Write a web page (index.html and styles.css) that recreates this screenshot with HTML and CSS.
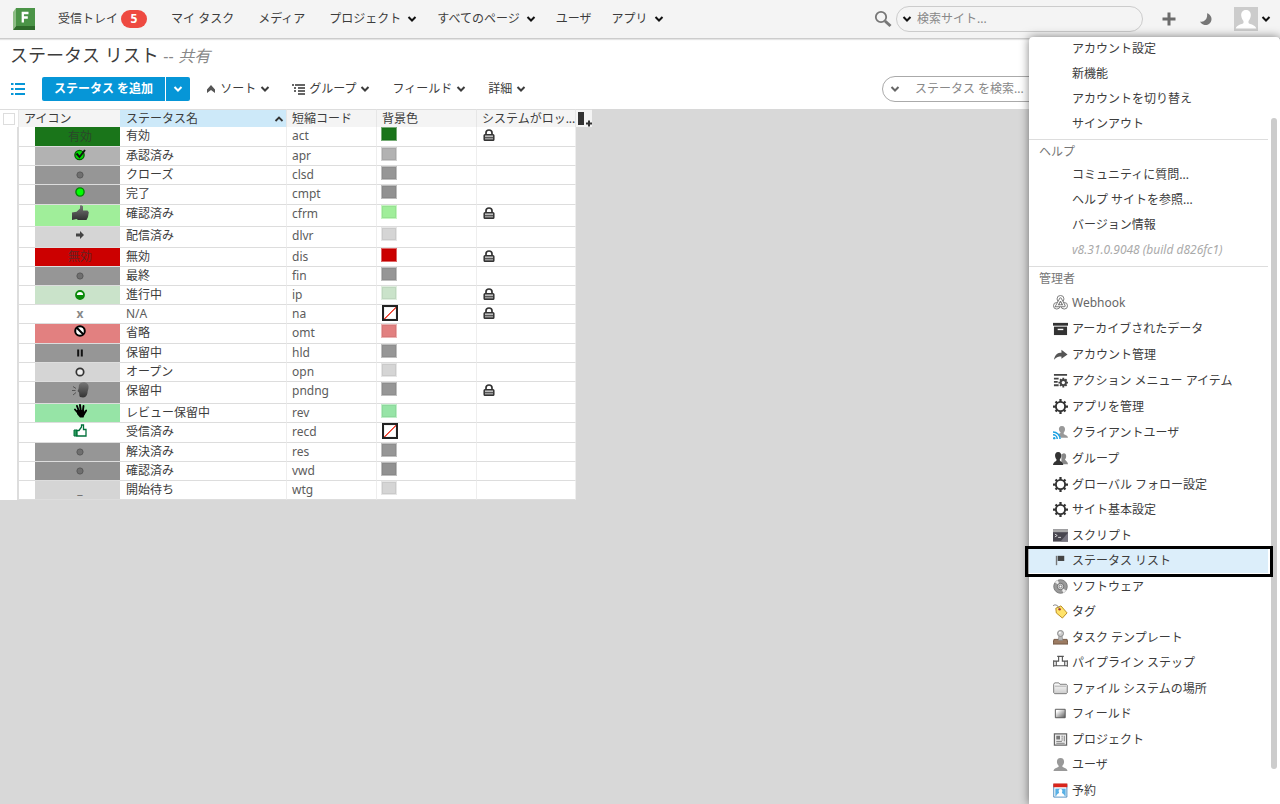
FILE: index.html
```html
<!DOCTYPE html>
<html lang="ja">
<head>
<meta charset="utf-8">
<title>ステータス リスト</title>
<link rel="stylesheet" href="styles.css">
</head>
<body>
<svg class="sprite" aria-hidden="true">
  <defs>
    <linearGradient id="g-dark" x1="0" y1="0" x2="0" y2="1"><stop offset="0" stop-color="#777"/><stop offset="1" stop-color="#333"/></linearGradient>
    <linearGradient id="g-field" x1="0" y1="0" x2="1" y2="1"><stop offset="0.2" stop-color="#fff"/><stop offset="1" stop-color="#555"/></linearGradient>
    <linearGradient id="g-folder" x1="0" y1="0" x2="0" y2="1"><stop offset="0" stop-color="#fff"/><stop offset="1" stop-color="#ccc"/></linearGradient>
  </defs>
  <symbol id="chev" viewBox="0 0 10 8"><path d="M1.500 2 L5 5.500 L8.500 2" fill="none" stroke="currentColor" stroke-width="2"/></symbol>
  <symbol id="lock" viewBox="0 0 12 12"><path d="M3 6V3.800a3 2.800 0 0 1 6 0V6" fill="none" stroke="#333" stroke-width="1.700"/><rect x="1.200" y="5.700" width="9.600" height="5.600" rx=".8" fill="#999" stroke="#333" stroke-width="1.500"/><path d="M2 7.200h8" stroke="#ccc"/><path d="M2 8.500h8" stroke="#444" stroke-width=".8"/></symbol>
  <symbol id="dot" viewBox="0 0 8 8"><circle cx="4" cy="4" r="3.100" fill="#6f6f6f" stroke="#5a5a5a"/></symbol>
  <symbol id="gear" viewBox="0 0 16 16"><path d="M8 0v16M0 8h16M2.700 2.700l10.600 10.600M13.300 2.700L2.700 13.300" stroke="#333" stroke-width="2.400"/><circle cx="8" cy="8" r="4.900" fill="#fff" stroke="#333" stroke-width="2"/></symbol>
  <symbol id="person" viewBox="0 0 16 16"><path d="M8 1c2.800 0 3.900 1.800 3.800 4.200-.1 2-.9 3.200-1.800 4.200v1.100c.6 1 5 1 5.500 4.500H.5c.5-3.500 4.900-3.500 5.500-4.500V9.400c-.9-1-1.700-2.200-1.800-4.200C4.100 2.800 5.200 1 8 1z" fill="currentColor"/></symbol>
</svg>

<header class="topbar">
  <a class="logo" href="#" aria-label="ホーム">
    <svg width="24" height="24" viewBox="0 0 24 24"><path d="M1 5l3-4v18l-3 4z" fill="#8cbc84"/><path d="M4 1h19v19H4z" fill="#4b9447"/><path d="M1 23l3-4h19v4z" fill="#2f6b2b"/><path d="M10.800 15.500V6h5.700M10.800 10.500h5" fill="none" stroke="#fff" stroke-width="2.300"/></svg>
  </a>
  <nav class="nav">
    <a href="#">受信トレイ<span class="badge">5</span></a>
    <a href="#">マイ タスク</a>
    <a href="#">メディア</a>
    <a href="#" class="drop">プロジェクト<svg class="chev"><use href="#chev"/></svg></a>
    <a href="#" class="drop">すべてのページ<svg class="chev"><use href="#chev"/></svg></a>
    <a href="#" class="tight">ユーザ</a>
    <a href="#" class="drop">アプリ<svg class="chev"><use href="#chev"/></svg></a>
  </nav>
  <div class="tools">
    <svg width="18" height="18" viewBox="0 0 18 18"><circle cx="7" cy="7" r="5.200" fill="none" stroke="#777" stroke-width="1.800"/><path d="M11 11l5.500 5" stroke="#777" stroke-width="3"/></svg>
    <label class="search site"><svg class="chev"><use href="#chev"/></svg><input type="text" placeholder="検索サイト..." aria-label="検索サイト"></label>
    <button class="icon-btn" aria-label="追加"><svg width="14" height="14" viewBox="0 0 14 14"><path d="M7 .5v13M.5 7h13" stroke="#6b6b6b" stroke-width="3"/></svg></button>
    <button class="icon-btn moon" aria-label="テーマ"><svg width="14" height="14" viewBox="0 0 14 14"><path d="M8 1.200a6 6 0 1 1-7 8.200c4 1.200 8-2.200 7-8.200z" fill="#777"/></svg></button>
    <button class="account" aria-label="アカウント"><svg width="24" height="24" viewBox="0 0 24 24"><path d="M0 0h24v24H0z" fill="#ccc"/><path d="M12 3c3.500 0 5 2.500 4.800 5.500-.2 2.800-1.300 4.300-2.300 5.500v2c1 1.500 7 1.500 7.800 5.500H1.700c.8-4 6.800-4 7.800-5.500v-2C8.500 12.800 7.400 11.300 7.200 8.500 7 5.500 8.500 3 12 3z" fill="#fff"/></svg><svg class="chev"><use href="#chev"/></svg></button>
  </div>
</header>

<main class="page">
  <h1 class="title">ステータス リスト <span class="sep">--</span> <em>共有</em></h1>
  <div class="toolbar">
    <button class="icon-btn list" aria-label="リスト表示"><svg width="14" height="14" viewBox="0 0 14 14"><path d="M0 2h2.500M4 2h10M0 7h2.500M4 7h10M0 12h2.500M4 12h10" stroke="#0696d7" stroke-width="2"/></svg></button>
    <div class="split"><button class="primary">ステータス を追加</button><button class="primary more" aria-label="その他"><svg class="chev"><use href="#chev"/></svg></button></div>
    <button class="tool"><svg width="10" height="8" viewBox="0 0 10 8"><path d="M5 0l4 4.500V8L5 5 1 8V4.500z" fill="#555"/></svg>ソート<svg class="chev"><use href="#chev"/></svg></button>
    <button class="tool"><svg width="13" height="11" viewBox="0 0 13 11"><path d="M0 1h2M3 1h10M2 4h2M6 4h7M2 7h2M6 7h7M6 10h7" stroke="#333" stroke-width="1.500"/></svg>グループ<svg class="chev"><use href="#chev"/></svg></button>
    <button class="tool">フィールド<svg class="chev"><use href="#chev"/></svg></button>
    <button class="tool">詳細<svg class="chev"><use href="#chev"/></svg></button>
    <label class="search local"><svg class="chev"><use href="#chev"/></svg><input type="text" placeholder="ステータス を検索..." aria-label="ステータス を検索"></label>
  </div>

  <div class="grid-area">
    <table class="grid">
      <colgroup><col class="c-check"><col class="c-icon"><col class="c-name"><col class="c-code"><col class="c-color"><col class="c-lock"><col class="c-add"></colgroup>
      <thead><tr>
        <th><input type="checkbox" aria-label="すべて選択"></th>
        <th>アイコン</th>
        <th class="sorted"><span>ステータス名<svg width="10" height="8" viewBox="0 0 10 8"><path d="M1.500 6L5 2.500 8.500 6" fill="none" stroke="#333" stroke-width="1.800"/></svg></span></th>
        <th>短縮コード</th><th>背景色</th><th>システムがロッ...</th>
        <th class="add"><button class="icon-btn" aria-label="列を追加"><svg width="16" height="16" viewBox="0 0 16 16"><path d="M2 1h6v13H2z" fill="#333"/><path d="M13 9.500v6M10 12.500h6" stroke="#333" stroke-width="2"/></svg></button></th>
      </tr></thead>
      <tbody>
        <tr class="h20"><td></td><td><div class="fill green">有効</div></td><td>有効</td><td>act</td><td><i class="sw green"></i></td><td><svg class="lock"><use href="#lock"/></svg></td></tr>
        <tr><td></td><td><div class="fill silver up"><svg width="14" height="14" viewBox="0 0 14 14"><circle cx="6.500" cy="8" r="4.600" fill="#0d0" stroke="#060" stroke-width="1.400"/><path d="M3.500 6.500l3 3.500L12 3" fill="none" stroke="#111" stroke-width="2"/></svg></div></td><td>承認済み</td><td>apr</td><td><i class="sw silver"></i></td><td></td></tr>
        <tr><td></td><td><div class="fill gray"><svg width="8" height="8"><use href="#dot"/></svg></div></td><td>クローズ</td><td>clsd</td><td><i class="sw gray"></i></td><td></td></tr>
        <tr class="h20"><td></td><td><div class="fill gray2 up"><svg width="10" height="10" viewBox="0 0 10 10"><circle cx="5" cy="5" r="4.100" fill="#0f0" stroke="#080" stroke-width="1.400"/></svg></div></td><td>完了</td><td>cmpt</td><td><i class="sw gray2"></i></td><td></td></tr>
        <tr class="h22"><td></td><td><div class="fill lime up"><svg width="17" height="16" viewBox="0 0 17 16"><path d="M0 7.500l4.500-.8L8 3.500V.8L9 0l2 1.200V5.500h4.500l1.300 1.800L16 12l-1.500 3H6l-1.500-1L0 15z" fill="url(#g-dark)"/></svg></div></td><td>確認済み</td><td>cfrm</td><td><i class="sw lime"></i></td><td><svg class="lock"><use href="#lock"/></svg></td></tr>
        <tr class="h21"><td></td><td><div class="fill pale up"><svg width="8" height="8" viewBox="0 0 8 8"><path d="M0 2.500h4V0l4 4-4 4V5.500H0z" fill="#444"/></svg></div></td><td>配信済み</td><td>dlvr</td><td><i class="sw pale"></i></td><td></td></tr>
        <tr><td></td><td><div class="fill red">無効</div></td><td>無効</td><td>dis</td><td><i class="sw red"></i></td><td><svg class="lock"><use href="#lock"/></svg></td></tr>
        <tr><td></td><td><div class="fill gray"><svg width="8" height="8"><use href="#dot"/></svg></div></td><td>最終</td><td>fin</td><td><i class="sw gray"></i></td><td></td></tr>
        <tr><td></td><td><div class="fill mint"><svg width="10" height="10" viewBox="0 0 10 10"><circle cx="5" cy="5" r="4" fill="#fff" stroke="#0a8a0a" stroke-width="1.800"/><path d="M1 5h8a4 4 0 0 1-8 0z" fill="#0a8a0a"/></svg></div></td><td>進行中</td><td>ip</td><td><i class="sw mint"></i></td><td><svg class="lock"><use href="#lock"/></svg></td></tr>
        <tr><td></td><td><div class="fill none"><b>x</b></div></td><td class="lat">N/A</td><td>na</td><td><i class="sw empty"></i></td><td><svg class="lock"><use href="#lock"/></svg></td></tr>
        <tr class="h20"><td></td><td><div class="fill rose up"><svg width="12" height="12" viewBox="0 0 12 12"><circle cx="6" cy="6" r="4.800" fill="#fff" stroke="#000" stroke-width="2"/><path d="M2.800 2.800l6.400 6.400" stroke="#000" stroke-width="2"/></svg></div></td><td>省略</td><td>omt</td><td><i class="sw rose"></i></td><td></td></tr>
        <tr><td></td><td><div class="fill gray"><svg width="6" height="8" viewBox="0 0 6 8"><path d="M1.200 .5v7M4.800 .5v7" stroke="#111" stroke-width="2"/></svg></div></td><td>保留中</td><td>hld</td><td><i class="sw gray"></i></td><td></td></tr>
        <tr><td></td><td><div class="fill pale"><svg width="10" height="10" viewBox="0 0 10 10"><circle cx="5" cy="5" r="3.700" fill="#eee" stroke="#333" stroke-width="1.700"/></svg></div></td><td>オープン</td><td>opn</td><td><i class="sw pale"></i></td><td></td></tr>
        <tr class="h22"><td></td><td><div class="fill gray up"><svg width="17" height="16" viewBox="0 0 17 16"><path d="M7 3c1-2 3-3 5.500-2.700C15.500.8 17 3 16.500 6c-.3 2.500-1 3-1 5-.5 3-2.500 4.500-4.500 4.500l-3-.5c-1-1-.5-3-1-4.500L5.500 9l1-2z" fill="url(#g-dark)"/><path d="M0 8.500h3.500M1 4.500l3 2M1 13l3-2.500" stroke="#555"/></svg></div></td><td>保留中</td><td>pndng</td><td><i class="sw gray"></i></td><td><svg class="lock"><use href="#lock"/></svg></td></tr>
        <tr><td></td><td><div class="fill jade up"><svg width="13" height="14" viewBox="0 0 13 14"><path d="M4 9L1 5.500M4.800 7L3 2M6.800 7L6 1M8.800 7.500L9.500 2M10 10l2.200-3.500" stroke="#000" stroke-width="1.900" stroke-linecap="round"/><path d="M3 6h7l1 3.500-1.500 4H6L3 10z" fill="#000"/></svg></div></td><td>レビュー保留中</td><td>rev</td><td><i class="sw jade"></i></td><td></td></tr>
        <tr class="h20"><td></td><td><div class="fill none up"><svg width="14" height="13" viewBox="0 0 14 13"><path d="M1 6h3v6H1z" fill="#2a9a5a" stroke="#00703a"/><path d="M4 6.500h2L8.500 3V1h2v4.500H13V12H4z" fill="#fff" stroke="#00703a" stroke-width="1.300"/></svg></div></td><td>受信済み</td><td>recd</td><td><i class="sw empty"></i></td><td></td></tr>
        <tr><td></td><td><div class="fill gray"><svg width="8" height="8"><use href="#dot"/></svg></div></td><td>解決済み</td><td>res</td><td><i class="sw gray"></i></td><td></td></tr>
        <tr><td></td><td><div class="fill gray2"><svg width="8" height="8"><use href="#dot"/></svg></div></td><td>確認済み</td><td>vwd</td><td><i class="sw gray2"></i></td><td></td></tr>
        <tr><td></td><td><div class="fill pale">_</div></td><td>開始待ち</td><td>wtg</td><td><i class="sw pale"></i></td><td></td></tr>
      </tbody>
    </table>
  </div>
</main>

<aside class="menu">
  <div class="thumb"></div>
  <section class="own">
    <ul><li><a href="#">アカウント設定</a></li><li><a href="#">新機能</a></li><li><a href="#">アカウントを切り替え</a></li><li><a href="#">サインアウト</a></li></ul>
  </section>
  <section>
    <h2>ヘルプ</h2>
    <ul><li><a href="#">コミュニティに質問...</a></li><li><a href="#">ヘルプ サイトを参照...</a></li><li><a href="#">バージョン情報</a></li><li class="version">v8.31.0.9048 (build d826fc1)</li></ul>
  </section>
  <section>
    <h2>管理者</h2>
    <ul class="admin">
      <li><a href="#" class="muted"><svg viewBox="0 0 16 16"><g fill="none" stroke="#777"><circle cx="8" cy="4.200" r="3.700"/><circle cx="4" cy="11.500" r="3.500"/><circle cx="12" cy="11.500" r="3.500"/></g><g fill="none" stroke="#777" stroke-width="3" stroke-linecap="round"><path d="M8 4.200l3.500 6.500M8 4.200L4 11.500h8"/></g><path d="M8 4.200l3.500 6.500M8 4.200L4 11.500h8" fill="none" stroke="#fff" stroke-width="1.200" stroke-linecap="round"/></svg>Webhook</a></li>
      <li><a href="#"><svg viewBox="0 0 16 16"><path d="M0 2h16v3H0z" fill="#333"/><path d="M1 6h14v9H1z" fill="#333"/><path d="M5 9h6" stroke="#fff" stroke-width="1.500"/></svg>アーカイブされたデータ</a></li>
      <li><a href="#"><svg viewBox="0 0 16 16"><path d="M1 13.500C2 8 5 6 9 6V3l6.500 5L9 12.500V10c-3 0-5 .5-8 3.500z" fill="#555"/></svg>アカウント管理</a></li>
      <li><a href="#"><svg viewBox="0 0 16 16"><path d="M1 2h14M1 6h5M1 9.500h4M1 13h5" stroke="#444" stroke-width="2"/><path d="M11 5v10.500M5.800 10.200h10.200M7.500 6.700l7 7M14.500 6.700l-7 7" stroke="#444" stroke-width="2"/><circle cx="11" cy="10.200" r="2.800" fill="#fff" stroke="#444" stroke-width="2"/></svg>アクション メニュー アイテム</a></li>
      <li><a href="#"><svg><use href="#gear"/></svg>アプリを管理</a></li>
      <li><a href="#"><svg viewBox="0 0 16 16"><path d="M9.500 1c2.700 0 3.400 2 3.300 3.800-.1 2-1 2.700-1.400 3.500v1.400c.5 1 4.100 1 4.600 3.800H8L6 9.500l2-1V8C7.100 7 6.400 6 6.300 4.600 6.200 3 6.800 1 9.500 1z" fill="#999"/><path d="M0 7.500A7.500 7.500 0 0 1 7.500 15M0 10.500A4.500 4.500 0 0 1 4.500 15" fill="none" stroke="#1ba1e2" stroke-width="1.600"/><circle cx="1.300" cy="14" r="1.300" fill="#1ba1e2"/></svg>クライアントユーザ</a></li>
      <li><a href="#"><svg viewBox="0 0 16 16"><path d="M11.500 2.500c2 0 2.700 1.500 2.500 3.500-.2 1.500-.8 2.200-1.200 3 .5 1.500 2.700 1.500 3.200 5H9V3.500z" fill="#888"/><path d="M5.500 1C8 1 9 3 8.800 5.300c-.2 1.700-.8 2.700-1.500 3.500V10c.5 1 3.200 1.200 3.700 5H0c.5-3.800 3.200-4 3.700-5V8.800C3 8 2.400 7 2.200 5.300 2 3 3 1 5.500 1z" fill="#333"/></svg>グループ</a></li>
      <li><a href="#"><svg><use href="#gear"/></svg>グローバル フォロー設定</a></li>
      <li><a href="#"><svg><use href="#gear"/></svg>サイト基本設定</a></li>
      <li><a href="#"><svg viewBox="0 0 16 16"><path d="M0 1.500h16v13H0z" fill="#48464f"/><path d="M0 1.500h16v3H0z" fill="#aaa"/><path d="M8 14.500L16 5v9.500z" fill="#777580"/><path d="M2 6.500l2.500 1.500L2 9.500M5.500 10h3" fill="none" stroke="#ddd"/></svg>スクリプト</a></li>
      <li class="current"><a href="#"><svg viewBox="0 0 16 16"><path d="M3 3h1.500v10H3z" fill="#777"/><path d="M5 3h7v5.500H5z" fill="#444"/></svg>ステータス リスト</a></li>
      <li><a href="#"><svg viewBox="0 0 16 16"><circle cx="8" cy="8" r="7.200" fill="#999" stroke="#777"/><path d="M8 8L2 3.500 5 1zM8 8l6 4.500-3 2.500z" fill="#eee"/><circle cx="8" cy="8" r="3.400" fill="#ddd" stroke="#666"/><circle cx="8" cy="8" r="1.500" fill="#fff" stroke="#777"/></svg>ソフトウェア</a></li>
      <li><a href="#"><svg viewBox="0 0 16 16"><path d="M3 4.500L8.500 2l6.500 7.500-5 5.500L3.500 9.500z" fill="#ffe36a" stroke="#b98a1c"/><circle cx="7" cy="5.500" r="1.300" fill="#a33"/><path d="M0 2c2-2 5-1 7 3" fill="none" stroke="#777"/></svg>タグ</a></li>
      <li><a href="#"><svg viewBox="0 0 16 16"><path d="M1 10h14l1 5H0z" fill="#9c7b62" stroke="#705440"/><path d="M6.500 5h3l.8 6H5.700z" fill="#bbb" stroke="#888" stroke-width=".7"/><circle cx="8" cy="3.700" r="3.200" fill="#ccc" stroke="#888"/><circle cx="7.300" cy="2.800" r="1" fill="#fff"/></svg>タスク テンプレート</a></li>
      <li><a href="#"><svg viewBox="0 0 16 16"><path d="M4.500 1.500h7M6 2v4.500H3.500v5h9v-5H10V2M.7 5.500v7M3.500 6.500H1M3.500 11.500H1M15.300 5.500v7M12.500 6.500h2.500M12.500 11.500h2.500" fill="none" stroke="#555" stroke-width="1.200"/></svg>パイプライン ステップ</a></li>
      <li><a href="#"><svg viewBox="0 0 16 16"><path d="M.7 12.500V3.500l1-1.500h4.500l1.200 1.500h6.800l1 1v8l-1 1H1.700z" fill="url(#g-folder)" stroke="#777"/><path d="M2 5.500h12" stroke="#aaa"/></svg>ファイル システムの場所</a></li>
      <li><a href="#"><svg viewBox="0 0 16 16"><path d="M2.500 3.500h10.500v9H2.500z" fill="url(#g-field)" stroke="#555"/></svg>フィールド</a></li>
      <li><a href="#"><svg viewBox="0 0 16 16"><path d="M1.500 2h13v12h-13z" fill="#eee" stroke="#666" stroke-width="1.300"/><path d="M3.500 4h4v4h-4z" fill="#777"/><path d="M9 4.500h1.500M9 6.500h1.500M9 8.500h1.500M12 4v6M3.500 10h6M3.500 12h9" stroke="#777"/></svg>プロジェクト</a></li>
      <li><a href="#"><svg class="soft"><use href="#person"/></svg>ユーザ</a></li>
      <li><a href="#"><svg viewBox="0 0 16 16"><path d="M.8 1.500h14v13.500H.8z" fill="#fff" stroke="#4587bd"/><path d="M.3 .5h15v4H.3z" fill="#d9261c"/><path d="M2.500 6h11v8h-11z" fill="#58b0e6"/><path d="M8 6.500c2 0 2.500 2 1.500 4 0 1 2.500 1 3 3.500h-9c.5-2.500 3-2.500 3-3.500-1-2-.5-4 1.500-4z" fill="#fff"/></svg>予約</a></li>
    </ul>
  </section>
</aside>
</body>
</html>
```
FILE: styles.css
```css
* { box-sizing: border-box; }
body {
  margin: 0;
  height: 100vh;
  display: flex;
  flex-direction: column;
  position: relative;
  overflow: hidden;
  background: #fff;
  color: #3c3c3c;
  font: 12px/18px "Noto Sans", "Noto Sans CJK JP", sans-serif;
}
a { color: inherit; text-decoration: none; }
button, input { font: inherit; color: inherit; margin: 0; }
button { border: 0; padding: 0; background: none; display: flex; align-items: center; }
svg { display: block; flex: none; }
ul { list-style: none; margin: 0; padding: 0; }
.sprite { position: absolute; width: 0; height: 0; }
.chev { width: 10px; height: 8px; }

/* Top bar */
.topbar {
  display: flex;
  align-items: center;
  height: 39px;
  flex: none;
  padding: 0 9px 0 12px;
  background: #f4f4f4;
  border-bottom: 1px solid #ccc;
  box-shadow: 0 1px 1px #e4e4e4;
}
.nav { display: flex; margin-left: 10px; }
.nav a { display: flex; align-items: center; padding: 0 12px; white-space: nowrap; }
.nav .drop { gap: 6px; padding-right: 8px; }
.nav .drop .chev { color: #111; }
.nav .tight { padding-right: 8px; }
.badge {
  width: 26px;
  margin-left: 3px;
  border-radius: 9px;
  background: #ee4a41;
  color: #fff;
  font-weight: 700;
  text-align: center;
}
.tools { display: flex; align-items: center; margin-left: auto; color: #111; }
.search {
  display: flex;
  align-items: center;
  height: 26px;
  border: 1px solid #bbb;
  border-radius: 13px;
}
.search input { flex: 1; min-width: 0; border: 0; outline: 0; padding: 0; background: none; }
.search input::placeholder { color: #888; opacity: 1; }
.site { width: 247px; margin-left: 4px; padding-left: 5px; gap: 5px; border-color: #ccc; }
.tools .icon-btn { margin-left: 19px; }
.tools .moon { margin-left: 23px; }
.account { gap: 3px; margin-left: 21px; }

/* Page heading and toolbar */
.page { flex: 1; display: flex; flex-direction: column; min-height: 0; }
.title { margin: 0; padding: 3px 10px 0; font-size: 18px; line-height: 26px; font-weight: 400; }
.sep, .title em { color: #888; font-size: 16px; }
.toolbar { display: flex; align-items: center; height: 40px; padding: 0 12px 0 11px; }
.split { display: flex; gap: 1px; margin: 0 16px 0 17px; }
.primary { height: 24px; padding: 0 12px; background: #0696d7; color: #fff; font-weight: 700; border-radius: 2px 0 0 2px; white-space: nowrap; }
.more { padding: 0 7px; border-radius: 0 2px 2px 0; }
.tool { gap: 4px; margin-right: 22px; white-space: nowrap; }
.local { width: 386px; margin-left: auto; padding-left: 7px; gap: 15px; border-color: #aaa; color: #666; }

/* Status table */
.grid-area { flex: 1; background: #d8d8d8; }
.grid { width: 592px; table-layout: fixed; border-collapse: separate; border-spacing: 0; }
.c-check { width: 19px; }
.c-icon { width: 101px; }
.c-name { width: 167px; }
.c-code { width: 90px; }
.c-color { width: 100px; }
.c-lock { width: 99px; }
.c-add { width: 16px; }
.grid th {
  height: 18px;
  padding: 0 0 0 5px;
  background: #f4f4f4;
  border-top: 1px solid #ddd;
  border-right: 1px solid #e6e6e6;
  font-weight: 400;
  line-height: 16px;
  text-align: left;
  white-space: nowrap;
}
.grid th:first-child { padding: 0 0 0 3px; background: #fff; }
.grid th:first-child input { appearance: none; display: block; width: 12px; height: 12px; border: 1px solid #ddd; background: #fff; }
.grid .sorted { padding-left: 6px; background: #cde9f9; }
.sorted span { display: flex; align-items: center; justify-content: space-between; padding-right: 2px; }
.grid th:nth-child(2) { border-right: 0; }
.grid .add { padding: 0; border-right: 0; }
.grid td {
  height: 19px;
  padding: 0 0 0 5px;
  background: #fff;
  border-right: 1px solid #eee;
  border-bottom: 1px solid #ddd;
  line-height: 18px;
  vertical-align: top;
}
.grid td:nth-child(n+4), .grid .lat { color: #5c5c5c; }
.grid td:nth-child(3) { padding-left: 6px; }
.grid td:first-child { border-bottom: 0; border-right: 2px solid #ddd; }
.grid td:nth-child(2) { padding: 0 0 0 16px; border-right: 0; }
.grid td:nth-child(5) { padding-left: 4px; }
.grid td:nth-child(6) { padding-left: 6px; }
.h20 td { height: 20px; }
.h21 td { height: 21px; }
.h22 td { height: 22px; }
.fill { display: flex; align-items: center; justify-content: center; height: 18px; padding-left: 5px; color: rgba(50, 50, 50, .7); }
.h20 .fill { height: 19px; }
.h21 .fill { height: 20px; }
.h22 .fill { height: 21px; }
.up { padding-bottom: 5px; }
.fill b { color: #888; }
.sw { display: block; width: 16px; height: 14px; border: 1px solid rgba(255, 255, 255, .4); box-shadow: inset 0 0 0 1px rgba(0, 0, 0, .05); }
.lock { width: 12px; height: 12px; margin-top: 2px; }
.green { background-color: #1a751a; }
.silver { background-color: #b2b2b2; }
.gray { background-color: #969696; }
.gray2 { background-color: #919191; }
.lime { background-color: #a0ee9a; }
.pale { background-color: #d5d5d5; }
.red { background-color: #c00; }
.mint { background-color: #cae3ca; }
.rose { background-color: #e28080; }
.jade { background-color: #96e4a6; }
.sw.empty { height: 16px; margin-left: 1px; border: 2px solid #222; background: linear-gradient(to bottom right, #fff 46%, #e43 47%, #e43 54%, #fff 55%); }

/* Account menu */
.menu {
  position: absolute;
  top: 37px;
  right: 0;
  bottom: 0;
  width: 251px;
  background: #fff;
  border-radius: 4px 4px 0 0;
  box-shadow: 0 0 10px rgba(0, 0, 0, .5);
}
.menu section { margin-right: 12px; padding-bottom: 4px; border-bottom: 1px solid #ddd; }
.menu .own { margin-top: -1px; padding-bottom: 3px; }
.menu section:last-child { border-bottom: 0; }
.menu h2 { margin: 0 0 -2px; padding-left: 10px; font-size: 12px; line-height: 24px; font-weight: 400; color: #777; }
.menu li { display: flex; height: 25px; padding-left: 43px; line-height: 25px; white-space: nowrap; }
.menu .version { color: #aaa; font-style: italic; }
.menu .admin li { height: 26px; padding-left: 24px; }
.menu .admin li:nth-child(2n+9) { height: 25px; }
.menu li a { display: flex; align-items: center; gap: 4px; }
.menu .muted { color: #666; }
.admin svg { width: 15px; height: 15px; }
.admin .soft { color: #999; }
.menu .current { position: relative; background: #dceefa; }
.current::after { content: ""; position: absolute; inset: -2px -5px -4px -4px; border: 3px solid #000; }
.thumb { position: absolute; top: 81px; right: 3px; width: 6px; height: 651px; border-radius: 3px; background: #ccc; }
```
